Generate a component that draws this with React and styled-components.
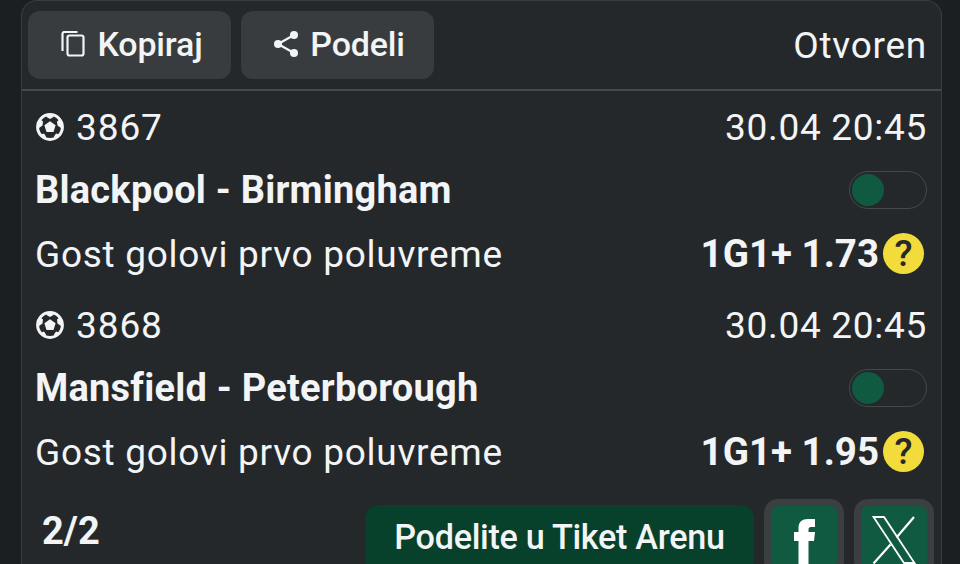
import React from "react";
import styled, { createGlobalStyle } from "styled-components";

const Global = createGlobalStyle`
  html, body { margin: 0; padding: 0; background: #1c1f21; }
  body { width: 960px; height: 564px; overflow: hidden; font-family: Roboto, "Liberation Sans", sans-serif; color: #f2f4f5; }
`;

const Card = styled.div`
  box-sizing: border-box;
  width: 921px;
  height: 564px;
  margin-left: 21px;
  overflow: hidden;
  background: #25282b;
  border: 1px solid #3a3d40;
  border-bottom: none;
  border-radius: 16px 16px 0 0;
`;

const Header = styled.div`
  display: flex;
  align-items: center;
  gap: 10px;
  height: 90px;
  box-sizing: border-box;
  padding: 10px 14px 11px 6px;
  border-bottom: 2px solid #46494c;
`;

const ActionButton = styled.div`
  display: flex;
  align-items: center;
  justify-content: center;
  gap: ${(p) => p.$gap}px;
  box-sizing: border-box;
  width: ${(p) => p.$w}px;
  height: 68px;
  padding: 0 0 2px ${(p) => p.$pl}px;
  background: #383c3f;
  border-radius: 12px;
  font-size: 34px;
  font-weight: 500;
  letter-spacing: -0.2px;
  color: #f2f4f5;
`;

const Status = styled.div`
  margin-left: auto;
  padding-top: 2px;
  font-size: 37px;
  letter-spacing: 0.75px;
`;

const Match = styled.div`
  display: flex;
  flex-direction: column;
  padding: 0 14px 0 13px;
  height: 198px;
  box-sizing: border-box;
`;

const Row = styled.div`
  display: flex;
  align-items: center;
  justify-content: space-between;
  height: ${(p) => p.$h}px;
`;

const Code = styled.div`
  display: flex;
  align-items: center;
  gap: 12px;
  padding: 1px 0 0 1px;
  font-size: 37px;
  letter-spacing: 0.9px;
`;

const DateText = styled.div`
  padding-top: 1px;
  font-size: 37px;
  letter-spacing: 0.7px;
`;

const Teams = styled.div`
  font-size: 38px;
  font-weight: 700;
  letter-spacing: 0.23px;
`;

const Market = styled.div`
  padding-top: 1px;
  font-size: 37px;
  letter-spacing: 0.72px;
`;

const Odds = styled.div`
  display: flex;
  align-items: center;
  gap: 4px;
  font-size: 38.5px;
  font-weight: 700;
  padding-right: 3px;
`;

const Help = styled.div`
  display: flex;
  align-items: center;
  justify-content: center;
  width: 41px;
  height: 41px;
  border-radius: 50%;
  background: #f2dc3c;
  color: #26282a;
  font-size: 37px;
  font-weight: 500;
`;

const Toggle = styled.div`
  display: flex;
  align-items: center;
  box-sizing: border-box;
  width: 78px;
  height: 38px;
  padding-left: 2px;
  border: 1px solid #46494c;
  border-radius: 19px;
`;

const Knob = styled.div`
  width: 32px;
  height: 32px;
  border-radius: 50%;
  background: #0f5a41;
`;

const Footer = styled.div`
  display: flex;
  align-items: flex-start;
  padding: 12px 7px 0 20px;
`;

const Count = styled.div`
  font-size: 38px;
  font-weight: 700;
  line-height: 44px;
  margin-top: 10px;
  margin-right: auto;
`;

const Arena = styled.div`
  display: flex;
  align-items: center;
  justify-content: center;
  box-sizing: border-box;
  width: 389px;
  height: 70px;
  margin-top: 6px;
  padding-bottom: 6px;
  background: #07402b;
  border-radius: 14px;
  font-size: 34.2px;
  font-weight: 500;
  letter-spacing: -0.3px;
`;

const Social = styled.div`
  display: flex;
  align-items: flex-start;
  justify-content: center;
  flex: none;
  box-sizing: border-box;
  width: 80px;
  height: 76px;
  margin-left: 10px;
  padding-top: ${(p) => p.$pt}px;
  background: #0f5a40;
  border: 7px solid #3c3f42;
  border-radius: 14px;
`;

const CopyIcon = () => (
  <svg width="24" height="26" viewBox="0 0 24 26" fill="none" stroke="#f2f4f5" strokeWidth="2.2">
    <rect x="6.5" y="4.5" width="16" height="20" rx="2" />
    <path d="M1.5 20V3a2 2 0 0 1 2-2h13" />
  </svg>
);

const ShareIcon = () => (
  <svg width="26" height="28" viewBox="0 0 26 28" fill="#f2f4f5">
    <circle cx="21" cy="5" r="4" />
    <circle cx="5" cy="14" r="4" />
    <circle cx="21" cy="23" r="4" />
    <path d="M5 14 21 5M5 14l16 9" stroke="#f2f4f5" strokeWidth="2.2" />
  </svg>
);

const BallIcon = () => (
  <svg width="28" height="28" viewBox="0 0 28 28" fill="#f2f4f5">
    <circle cx="14" cy="14" r="12.4" fill="none" stroke="#f2f4f5" strokeWidth="3" />
    <path d="M14 8.2 19.6 12.3 17.5 18.9H10.5L8.4 12.3Z" />
    <path d="M11 1.5H17L17.5 4 14 6 10.5 4Z" />
    <path d="M1.5 12 4.5 6.5 7 8.5 6.5 12.5 3 15Z" />
    <path d="M26.5 12 23.5 6.5 21 8.5 21.5 12.5 25 15Z" />
    <path d="M5 21.5 8 20.5 10 23.5 9 26Z" />
    <path d="M23 21.5 20 20.5 18 23.5 19 26Z" />
  </svg>
);

const FacebookIcon = () => (
  <svg width="21" height="46" viewBox="0 0 21 46" fill="#fff">
    <path d="M4.5 46V22H0v-9h4.5V9C4.5 3 8 0 14 0h7v8h-4c-2 0-2.5 1-2.5 3v2H21l-1 9h-5.5v24Z" />
  </svg>
);

const XIcon = () => (
  <svg width="44" height="48" viewBox="0 0 44 48" fill="none" stroke="#fff" strokeWidth="1.8">
    <path d="M1.5 1H12L42.5 47H32Z" />
    <path d="M42 1 24.5 21.5M18.5 28.5 1.5 47.5" strokeWidth="2.2" />
  </svg>
);

const MatchBlock = ({ code, teams, odds }) => (
  <Match>
    <Row $h={71}>
      <Code>
        <BallIcon />
        {code}
      </Code>
      <DateText>30.04 20:45</DateText>
    </Row>
    <Row $h={56}>
      <Teams>{teams}</Teams>
      <Toggle>
        <Knob />
      </Toggle>
    </Row>
    <Row $h={71}>
      <Market>Gost golovi prvo poluvreme</Market>
      <Odds>
        {odds}
        <Help>?</Help>
      </Odds>
    </Row>
  </Match>
);

export default function App() {
  return (
    <>
      <Global />
      <Card>
        <Header>
          <ActionButton $w={203} $gap={13} $pl={4}>
            <CopyIcon />
            Kopiraj
          </ActionButton>
          <ActionButton $w={193} $gap={11.5} $pl={2.5}>
            <ShareIcon />
            Podeli
          </ActionButton>
          <Status>Otvoren</Status>
        </Header>
        <MatchBlock code="3867" teams="Blackpool - Birmingham" odds="1G1+ 1.73" />
        <MatchBlock code="3868" teams="Mansfield - Peterborough" odds="1G1+ 1.95" />
        <Footer>
          <Count>2/2</Count>
          <Arena>Podelite u Tiket Arenu</Arena>
          <Social $pt={13}>
            <FacebookIcon />
          </Social>
          <Social $pt={10}>
            <XIcon />
          </Social>
        </Footer>
      </Card>
    </>
  );
}
